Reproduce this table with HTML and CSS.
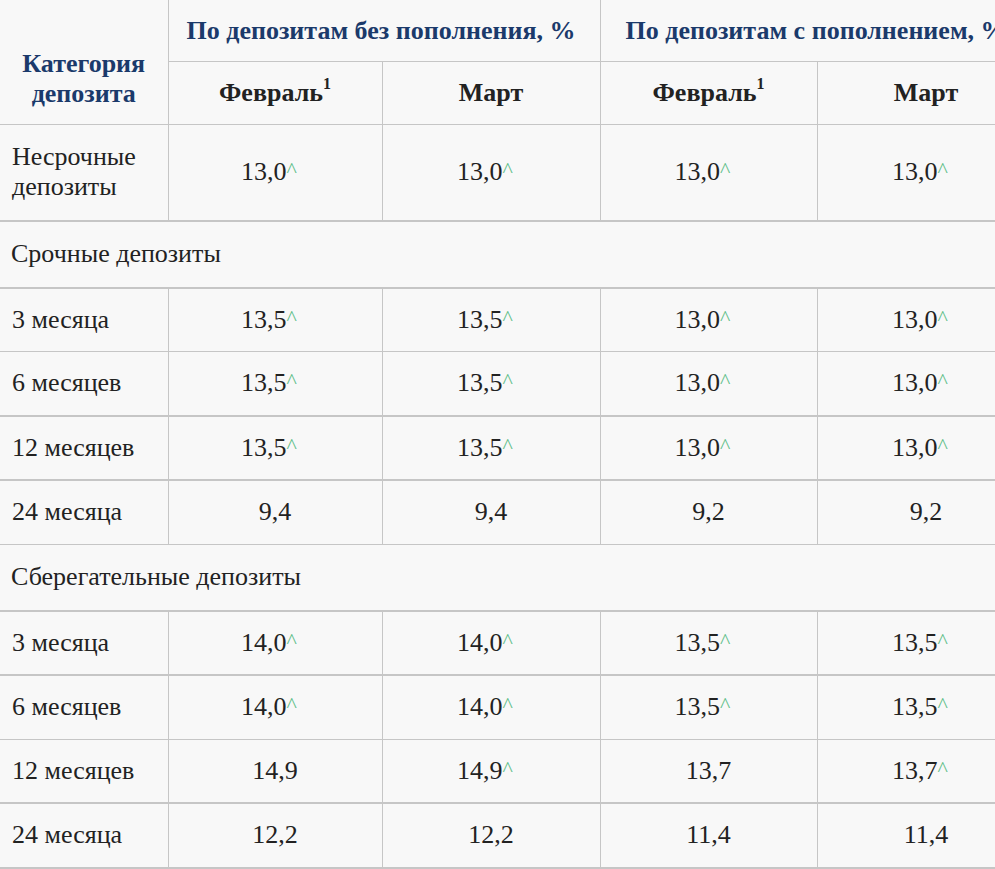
FILE: index.html
```html
<!DOCTYPE html>
<html lang="ru">
<head>
<meta charset="utf-8">
<title>Ставки по депозитам</title>
<link rel="stylesheet" href="styles.css">
</head>
<body>
<table class="rates">
  <colgroup>
    <col class="c-cat">
    <col class="c-a">
    <col class="c-b">
    <col class="c-c">
    <col class="c-d">
  </colgroup>
  <thead>
    <tr class="h1">
      <th class="cat" rowspan="2">Категория<br>депозита</th>
      <th class="grp" colspan="2">По депозитам без пополнения, %</th>
      <th class="grp sep" colspan="2">По депозитам с пополнением, %</th>
    </tr>
    <tr class="h2">
      <th class="mon">Февраль<sup>1</sup></th>
      <th class="mon">Март</th>
      <th class="mon sep">Февраль<sup>1</sup></th>
      <th class="mon sep">Март</th>
    </tr>
  </thead>
  <tbody>
    <tr class="b2 first">
      <td class="name">Несрочные<br>депозиты</td>
      <td class="val">13,0<span class="up">^</span></td>
      <td class="val">13,0<span class="up">^</span></td>
      <td class="val sep">13,0<span class="up">^</span></td>
      <td class="val sep">13,0<span class="up">^</span></td>
    </tr>
    <tr class="section b2">
      <td colspan="5">Срочные депозиты</td>
    </tr>
    <tr>
      <td class="name">3 месяца</td>
      <td class="val">13,5<span class="up">^</span></td>
      <td class="val">13,5<span class="up">^</span></td>
      <td class="val sep">13,0<span class="up">^</span></td>
      <td class="val sep">13,0<span class="up">^</span></td>
    </tr>
    <tr class="b2">
      <td class="name">6 месяцев</td>
      <td class="val">13,5<span class="up">^</span></td>
      <td class="val">13,5<span class="up">^</span></td>
      <td class="val sep">13,0<span class="up">^</span></td>
      <td class="val sep">13,0<span class="up">^</span></td>
    </tr>
    <tr class="b2">
      <td class="name">12 месяцев</td>
      <td class="val">13,5<span class="up">^</span></td>
      <td class="val">13,5<span class="up">^</span></td>
      <td class="val sep">13,0<span class="up">^</span></td>
      <td class="val sep">13,0<span class="up">^</span></td>
    </tr>
    <tr>
      <td class="name">24 месяца</td>
      <td class="val">9,4</td>
      <td class="val">9,4</td>
      <td class="val sep">9,2</td>
      <td class="val sep">9,2</td>
    </tr>
    <tr class="section b2">
      <td colspan="5">Сберегательные депозиты</td>
    </tr>
    <tr class="b2">
      <td class="name">3 месяца</td>
      <td class="val">14,0<span class="up">^</span></td>
      <td class="val">14,0<span class="up">^</span></td>
      <td class="val sep">13,5<span class="up">^</span></td>
      <td class="val sep">13,5<span class="up">^</span></td>
    </tr>
    <tr>
      <td class="name">6 месяцев</td>
      <td class="val">14,0<span class="up">^</span></td>
      <td class="val">14,0<span class="up">^</span></td>
      <td class="val sep">13,5<span class="up">^</span></td>
      <td class="val sep">13,5<span class="up">^</span></td>
    </tr>
    <tr class="b2">
      <td class="name">12 месяцев</td>
      <td class="val">14,9</td>
      <td class="val">14,9<span class="up">^</span></td>
      <td class="val sep">13,7</td>
      <td class="val sep">13,7<span class="up">^</span></td>
    </tr>
    <tr class="b2">
      <td class="name">24 месяца</td>
      <td class="val">12,2</td>
      <td class="val">12,2</td>
      <td class="val sep">11,4</td>
      <td class="val sep">11,4</td>
    </tr>
  </tbody>
</table>
</body>
</html>
```

FILE: styles.css
```css
html, body {
  margin: 0;
  padding: 0;
  background: #f8f8f8;
  overflow: hidden;
}

body {
  font-family: "Liberation Serif", "Times New Roman", Tinos, "Noto Serif", "DejaVu Serif", FreeSerif, Georgia, serif;
  font-size: 26px;
  color: #222;
}

.rates {
  border-collapse: collapse;
  table-layout: fixed;
  width: 1035px;
}

.c-cat { width: 168px; }
.c-a { width: 214px; }
.c-b { width: 218px; }
.c-c { width: 217px; }
.c-d { width: 218px; }

.rates th,
.rates td {
  border: 1px solid #c6c6c6;
  line-height: 30px;
  padding: 16.25px 12px;
  font-family: inherit;
}

.rates tr > :first-child {
  border-left: none;
}

.rates th {
  font-weight: bold;
  text-align: center;
}

.h1 th {
  border-top: none;
  padding-top: 15.5px;
  padding-bottom: 15px;
}

.h1 .grp {
  color: #1b3a6b;
  white-space: nowrap;
  text-align: left;
  padding-left: 18px;
}

.h1 .grp.sep {
  padding-left: 25px;
}

.cat {
  color: #1b3a6b;
  vertical-align: bottom;
  padding-bottom: 20px;
  padding-left: 4px;
  padding-right: 12px;
}

.mon {
  color: #222;
  padding-top: 18.5px;
  padding-bottom: 18px;
}

.mon sup {
  font-size: 16px;
  line-height: 0;
  position: relative;
  top: -2px;
}

.sep {
  border-left-width: 2px;
}

.b2 > td {
  border-bottom-width: 2px;
}

.first > td {
  padding-top: 17px;
  padding-bottom: 17.5px;
}

.name {
  text-align: left;
  padding-left: 11px;
}

.val {
  text-align: center;
}

.up {
  color: #5fbf8a;
  font-size: 22px;
  line-height: 0;
  position: relative;
  top: -3px;
  margin-right: 12px;
}

.section td {
  text-align: left;
  padding-left: 11px;
  padding-top: 17px;
  padding-bottom: 18px;
}
```
